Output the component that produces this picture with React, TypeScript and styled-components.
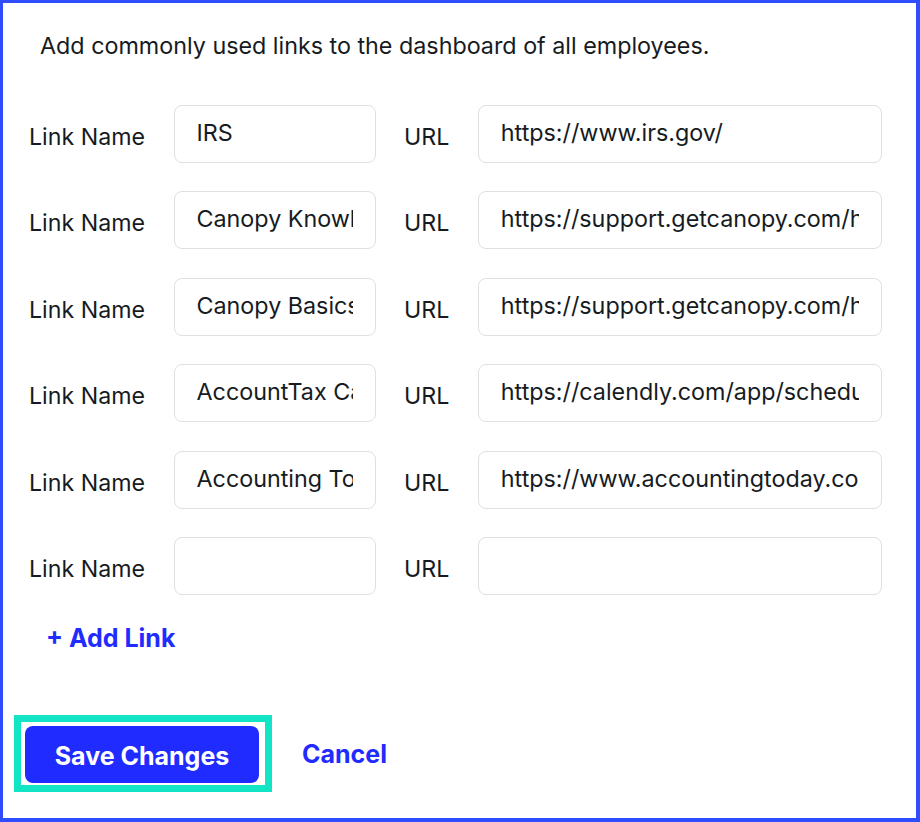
import styled, { createGlobalStyle } from 'styled-components'

const GlobalStyle = createGlobalStyle`
  * { box-sizing: border-box; }
  body {
    margin: 0;
    background: #fff;
    font-family: Inter, "Noto Sans", sans-serif;
    color: #161b22;
  }
`

const links = [
  { name: 'IRS', url: 'https://www.irs.gov/' },
  { name: 'Canopy Knowledge Base', url: 'https://support.getcanopy.com/hc/en-us' },
  { name: 'Canopy Basics Course', url: 'https://support.getcanopy.com/hc/en-us/articles' },
  { name: 'AccountTax Calendly', url: 'https://calendly.com/app/scheduled_events' },
  { name: 'Accounting Today', url: 'https://www.accountingtoday.com/' },
  { name: '', url: '' },
]

export default function App() {
  return (
    <>
      <GlobalStyle />
      <Frame>
        <Intro>Add commonly used links to the dashboard of all employees.</Intro>
        <LinkGrid>
          {links.map((link, i) => (
            <Row key={i}>
              <Label>Link Name</Label>
              <Field defaultValue={link.name} aria-label="Link Name" />
              <Label>URL</Label>
              <Field defaultValue={link.url} aria-label="URL" />
            </Row>
          ))}
        </LinkGrid>
        <AddLink type="button">+ Add Link</AddLink>
        <Actions>
          <FocusRing>
            <SaveButton type="button">Save Changes</SaveButton>
          </FocusRing>
          <TextButton type="button">Cancel</TextButton>
        </Actions>
      </Frame>
    </>
  )
}

const Frame = styled.div`
  width: 920px;
  height: 822px;
  border: solid #2f4dff;
  border-width: 3px 4px 4px 3px;
  padding: 28px 34px 0 26px;
`

const Intro = styled.p`
  margin: 0 0 44px 11px;
  font-size: 23.3px;
  line-height: 30px;
  color: #161b22;
`

const LinkGrid = styled.div`
  display: grid;
  grid-template-columns: auto 202px auto 1fr;
  column-gap: 28.5px;
  row-gap: 28.4px;
`

const Row = styled.div`
  display: contents;
`

const Label = styled.span`
  font-size: 23.2px;
  align-self: center;
  padding-top: 6px;
  white-space: nowrap;
`

const Field = styled.input`
  height: 58px;
  width: 100%;
  min-width: 0;
  padding: 0 22px 3px;
  border: 1px solid #e0e0e0;
  border-radius: 8px;
  font-family: Inter, "Noto Sans", sans-serif;
  font-size: 23.3px;
  color: #161b22;
  background: #fff;
  outline: none;
`

const AddLink = styled.button`
  display: block;
  margin: 28px 0 0 17px;
  padding: 0;
  border: 0;
  background: none;
  font-family: Inter, "Noto Sans", sans-serif;
  font-weight: 700;
  font-size: 25px;
  line-height: 30px;
  color: #1f2bff;
  cursor: pointer;
`

const Actions = styled.div`
  display: flex;
  align-items: center;
  margin: 62px 0 0 -15px;
  gap: 30px;
`

const FocusRing = styled.div`
  border: 7px solid #12e4c6;
  padding: 4px 6px 2px 4px;
`

const SaveButton = styled.button`
  display: block;
  width: 234px;
  height: 57px;
  padding: 3px 0 0;
  border: 0;
  border-radius: 8px;
  background: #1f2bff;
  color: #fff;
  font-family: Inter, "Noto Sans", sans-serif;
  font-weight: 700;
  font-size: 25px;
  cursor: pointer;
`

const TextButton = styled.button`
  padding: 2px 0 0;
  border: 0;
  background: none;
  font-family: Inter, "Noto Sans", sans-serif;
  font-weight: 700;
  font-size: 25px;
  color: #1f2bff;
  cursor: pointer;
`
